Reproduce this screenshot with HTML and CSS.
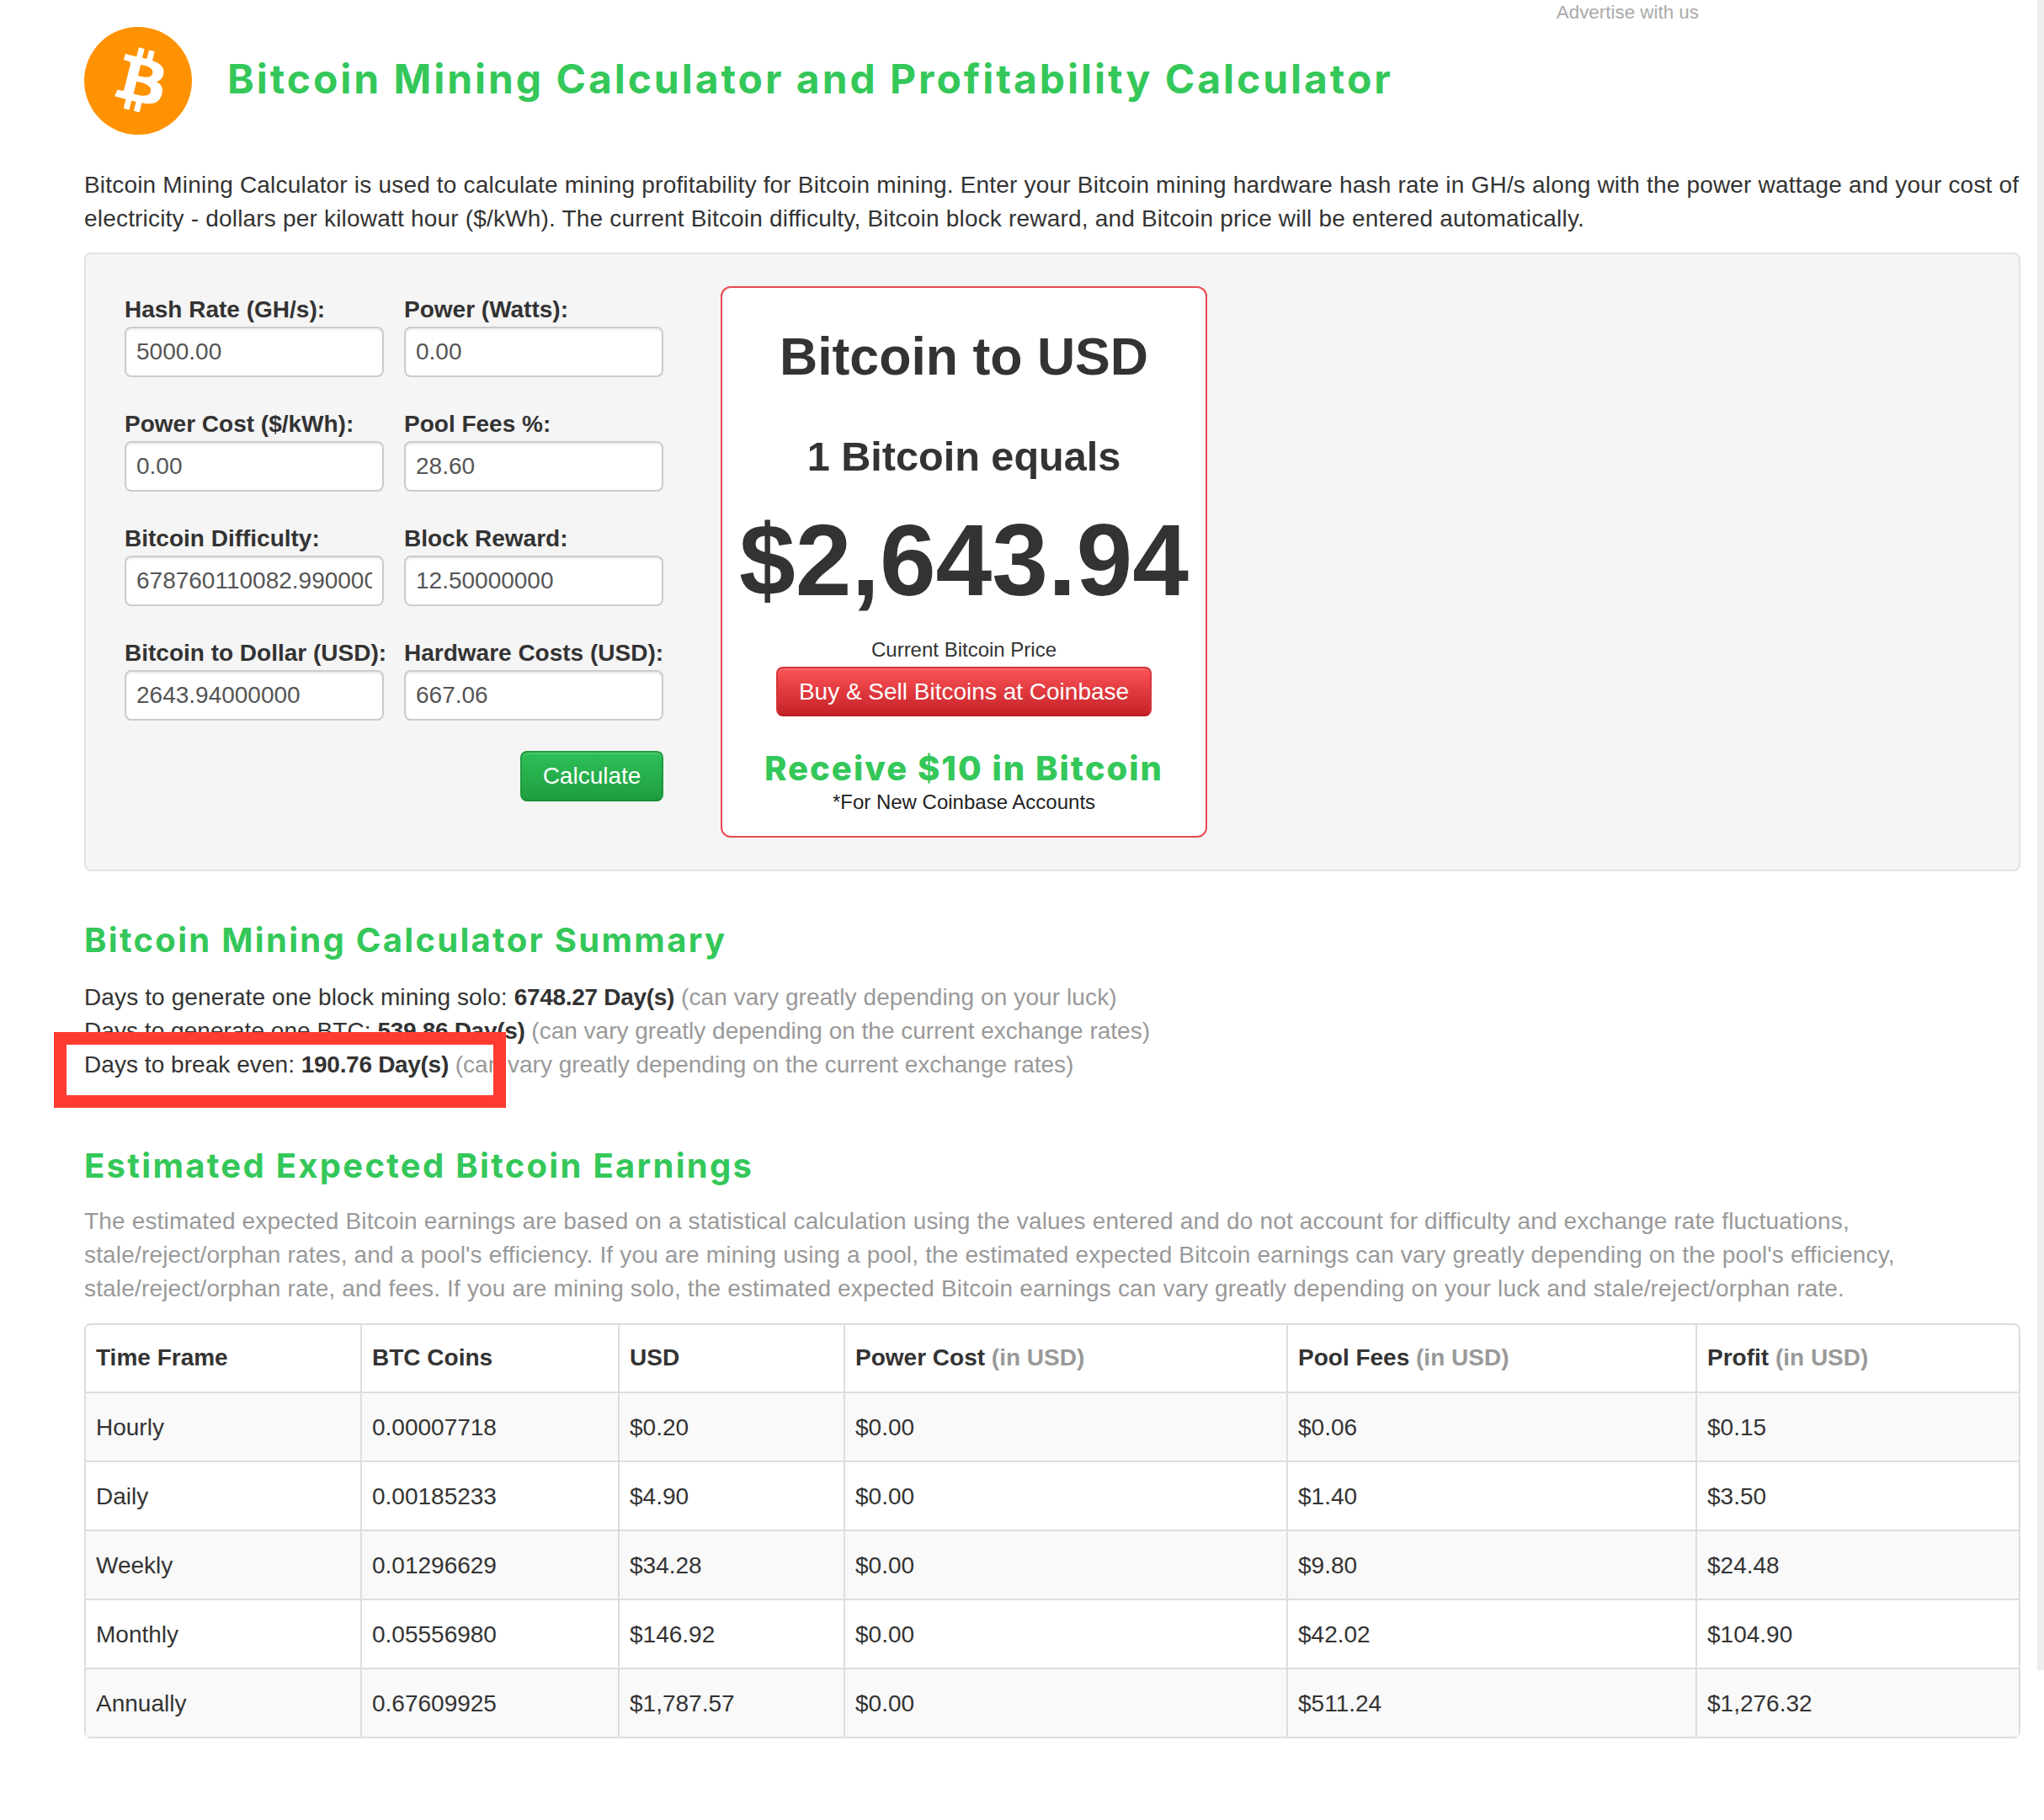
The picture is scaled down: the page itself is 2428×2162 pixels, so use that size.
FILE: index.html
```html
<!DOCTYPE html>
<html lang="en">
<head>
<meta charset="utf-8">
<title>Bitcoin Mining Calculator and Profitability Calculator</title>
<link rel="stylesheet" href="styles.css">
</head>
<body>
<div class="scroll-track"></div>
<main class="page">
  <header class="header">
    <svg class="logo" viewBox="0 0 24 24" aria-hidden="true"><circle cx="12" cy="12" r="12" fill="#ff9200"/><path fill="#fff" transform="translate(12 12) scale(.95) translate(-11.3 -12)" d="M17.288 10.291c.24-1.59-.974-2.45-2.64-3.03l.54-2.153-1.315-.33-.525 2.107c-.345-.087-.705-.167-1.064-.25l.526-2.127-1.32-.33-.54 2.165c-.285-.067-.565-.132-.84-.2l-1.815-.45-.35 1.407s.975.225.955.236c.535.136.63.486.615.766l-1.477 5.92c-.075.166-.24.406-.614.314.015.02-.96-.24-.96-.24l-.66 1.51 1.71.426.93.242-.54 2.19 1.32.327.54-2.17c.36.1.705.19 1.05.273l-.51 2.154 1.32.33.545-2.19c2.24.427 3.93.257 4.64-1.774.57-1.637-.03-2.58-1.217-3.196.854-.193 1.5-.76 1.68-1.93h.01zm-3.01 4.22c-.404 1.64-3.157.75-4.05.53l.72-2.9c.896.23 3.757.67 3.33 2.37zm.41-4.24c-.37 1.49-2.662.735-3.405.55l.654-2.64c.744.18 3.137.524 2.75 2.084v.006z"/></svg>
    <h1 class="title">Bitcoin Mining Calculator and Profitability Calculator</h1>
    <a class="ad-link">Advertise with us</a>
  </header>

  <p class="intro">Bitcoin Mining Calculator is used to calculate mining profitability for Bitcoin mining. Enter your Bitcoin mining hardware hash rate in GH/s along with the power wattage and your cost of electricity - dollars per kilowatt hour ($/kWh). The current Bitcoin difficulty, Bitcoin block reward, and Bitcoin price will be entered automatically.</p>

  <section class="panel">
    <form class="calc-form">
      <div class="field"><label>Hash Rate (GH/s):</label><input type="text" value="5000.00"></div>
      <div class="field"><label>Power (Watts):</label><input type="text" value="0.00"></div>
      <div class="field"><label>Power Cost ($/kWh):</label><input type="text" value="0.00"></div>
      <div class="field"><label>Pool Fees %:</label><input type="text" value="28.60"></div>
      <div class="field"><label>Bitcoin Difficulty:</label><input type="text" value="678760110082.99000000"></div>
      <div class="field"><label>Block Reward:</label><input type="text" value="12.50000000"></div>
      <div class="field"><label>Bitcoin to Dollar (USD):</label><input type="text" value="2643.94000000"></div>
      <div class="field"><label>Hardware Costs (USD):</label><input type="text" value="667.06"></div>
      <div class="form-actions"><button type="button" class="btn btn-green">Calculate</button></div>
    </form>

    <aside class="price-card">
      <h2 class="card-title">Bitcoin to USD</h2>
      <h3 class="card-sub">1 Bitcoin equals</h3>
      <div class="card-price">$2,643.94</div>
      <div class="card-caption">Current Bitcoin Price</div>
      <a class="btn btn-red">Buy &amp; Sell Bitcoins at Coinbase</a>
      <div class="card-offer">Receive $10 in Bitcoin</div>
      <div class="card-note">*For New Coinbase Accounts</div>
    </aside>
  </section>

  <h2 class="section-title summary-title">Bitcoin Mining Calculator Summary</h2>
  <div class="summary">
    <div class="summary-first">Days to generate one block mining solo: <b>6748.27 Day(s)</b> <span class="muted">(can vary greatly depending on your luck)</span></div>
    <div>Days to generate one BTC: <b>539.86 Day(s)</b> <span class="muted">(can vary greatly depending on the current exchange rates)</span></div>
    <div>Days to break even: <b>190.76 Day(s)</b> <span class="muted">(can vary greatly depending on the current exchange rates)</span></div>
    <div class="highlight"></div>
  </div>

  <h2 class="section-title earnings-title">Estimated Expected Bitcoin Earnings</h2>
  <p class="disclaimer">The estimated expected Bitcoin earnings are based on a statistical calculation using the values entered and do not account for difficulty and exchange rate fluctuations, stale/reject/orphan rates, and a pool's efficiency. If you are mining using a pool, the estimated expected Bitcoin earnings can vary greatly depending on the pool's efficiency, stale/reject/orphan rate, and fees. If you are mining solo, the estimated expected Bitcoin earnings can vary greatly depending on your luck and stale/reject/orphan rate.</p>

  <table class="earnings">
    <colgroup>
      <col class="c1"><col class="c2"><col class="c3"><col class="c4"><col class="c5"><col class="c6">
    </colgroup>
    <thead>
      <tr><th>Time Frame</th><th>BTC Coins</th><th>USD</th><th>Power Cost <span class="muted">(in USD)</span></th><th>Pool Fees <span class="muted">(in USD)</span></th><th>Profit <span class="muted">(in USD)</span></th></tr>
    </thead>
    <tbody>
      <tr><td>Hourly</td><td>0.00007718</td><td>$0.20</td><td>$0.00</td><td>$0.06</td><td>$0.15</td></tr>
      <tr><td>Daily</td><td>0.00185233</td><td>$4.90</td><td>$0.00</td><td>$1.40</td><td>$3.50</td></tr>
      <tr><td>Weekly</td><td>0.01296629</td><td>$34.28</td><td>$0.00</td><td>$9.80</td><td>$24.48</td></tr>
      <tr><td>Monthly</td><td>0.05556980</td><td>$146.92</td><td>$0.00</td><td>$42.02</td><td>$104.90</td></tr>
      <tr><td>Annually</td><td>0.67609925</td><td>$1,787.57</td><td>$0.00</td><td>$511.24</td><td>$1,276.32</td></tr>
    </tbody>
  </table>
</main>
</body>
</html>
```
FILE: styles.css
```css
* { box-sizing: border-box; }
html, body { margin: 0; padding: 0; }
body {
  position: relative;
  background: #fff;
  color: #333;
  font: 28px/40px "Liberation Sans", Arial, sans-serif;
  overflow: hidden;
}
.scroll-track {
  position: absolute;
  top: 0;
  right: 0;
  width: 8px;
  height: 1984px;
  background: #eee;
}
.page { width: 2400px; padding-left: 100px; }

.header { display: flex; align-items: flex-start; height: 160px; }
.logo { width: 128px; height: 128px; margin-top: 32px; flex: none; }
.title {
  margin: 64px 0 0 42px;
  font: 700 48px/60px Inter, sans-serif;
  letter-spacing: 2.96px;
  color: #34c759;
  white-space: nowrap;
}
.ad-link {
  margin: 0 382px 0 auto;
  font-size: 22.4px;
  line-height: 30px;
  color: #aaa;
  white-space: nowrap;
}
.intro { margin: 40px 0 20px; letter-spacing: .19px; }

.panel {
  display: flex;
  height: 735px;
  padding: 38px 46px;
  gap: 68px;
  background: #f5f5f5;
  border: 2px solid #e3e3e3;
  border-radius: 8px;
}
.calc-form {
  display: grid;
  grid-template-columns: 308px 308px;
  grid-auto-rows: 100px;
  column-gap: 24px;
  row-gap: 36px;
  margin-top: 8px;
  align-self: flex-start;
}
.field label { display: block; font-weight: 700; white-space: nowrap; }
.field input {
  display: block;
  width: 100%;
  height: 60px;
  padding: 0 12px;
  border: 2px solid #ccc;
  border-radius: 8px;
  background: #fff;
  box-shadow: inset 0 2px 2px rgba(0,0,0,.075);
  color: #555;
  font: inherit;
  outline: none;
}
.form-actions { grid-column: 1 / -1; display: flex; justify-content: flex-end; }
.btn {
  display: flex;
  align-items: center;
  justify-content: center;
  height: 60px;
  border-radius: 8px;
  color: #fff;
  font: inherit;
  border: 2px solid;
  padding: 0;
  box-shadow: inset 0 2px 0 rgba(255,255,255,.15);
}
.btn-green {
  width: 170px;
  background: linear-gradient(#2dc057, #1f9d40);
  border-color: #1f9a3e #1f9a3e #1a8a36;
}
.btn-red {
  width: 446px;
  height: 59px;
  margin: 3px auto 0;
  background: linear-gradient(#fb5257, #c52227);
  border-color: #d5343a #d5343a #b81f24;
}

.price-card {
  width: 578px;
  height: 655px;
  padding-top: 48px;
  border: 2px solid #e9494f;
  border-radius: 12px;
  background: #fff;
  text-align: center;
}
.card-title { margin: 0; font-size: 62.6px; line-height: 66px; font-weight: 700; }
.card-sub { margin: 60px 0 0; font-size: 48.6px; line-height: 52px; font-weight: 700; }
.card-price { margin-top: 32px; font-size: 120px; line-height: 130px; font-weight: 700; white-space: nowrap; }
.card-caption { margin-top: 25px; font-size: 24px; line-height: 34px; }
.card-offer {
  margin-top: 37px;
  font: 800 40px/50px Inter, sans-serif;
  letter-spacing: 2px;
  color: #34c759;
  white-space: nowrap;
}
.card-note { font-size: 24px; line-height: 30px; color: #222; }

.section-title {
  margin: 0;
  font: 700 40px/50px Inter, sans-serif;
  letter-spacing: 2.3px;
  color: #34c759;
}
.summary-title { margin-top: 57px; }
.summary { position: relative; margin-top: 23px; letter-spacing: .05px; }
.summary-first { letter-spacing: .12px; }
.muted { color: #999; font-weight: 400; }
.summary b { font-weight: 700; letter-spacing: -.3px; }
.summary .muted { letter-spacing: 0; }
.summary-first .muted { letter-spacing: .1px; }
.highlight {
  position: absolute;
  left: -36px;
  top: 61px;
  width: 537px;
  height: 90px;
  border: 15px solid #ff3b30;
}
.earnings-title { margin-top: 75px; }
.disclaimer { margin: 21px 0 21px; color: #999; letter-spacing: .17px; }

.earnings {
  width: 2300px;
  table-layout: fixed;
  border-collapse: separate;
  border-spacing: 0;
  border: 2px solid #ddd;
  border-radius: 8px;
}
.c1 { width: 326px; }
.c2 { width: 306px; }
.c3 { width: 268px; }
.c4 { width: 526px; }
.c5 { width: 486px; }
.earnings th, .earnings td {
  padding: 21px 12px 19px 12px;
  text-align: left;
  border-left: 2px solid #ddd;
  border-top: 2px solid #ddd;
}
.earnings thead th { padding: 19px 12px 20px; border-top: 0; }
.earnings th .muted { font-weight: 700; }
.earnings tr > :first-child { border-left: 0; }
.earnings tbody tr:nth-child(odd) td { background: #f9f9f9; }
```
